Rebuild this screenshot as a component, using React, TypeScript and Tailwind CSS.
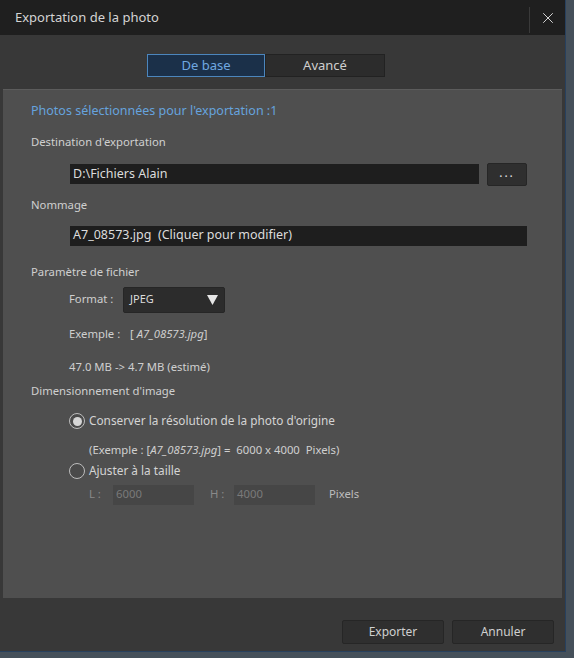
import { X } from 'lucide-react'

const font = { fontFamily: '"Noto Sans", "Open Sans", sans-serif' }

function Radio({ checked }: { checked?: boolean }) {
  return (
    <span className="w-[16px] h-[16px] rounded-full border border-[#bdbdbd] bg-[#4a4a4a] flex items-center justify-center shrink-0">
      {checked && <span className="w-[9px] h-[9px] rounded-full bg-[#d6d6d6]" />}
    </span>
  )
}

export default function App() {
  return (
    <div className="w-[574px] h-[658px] bg-[#45505a] overflow-hidden" style={font}>
      <div className="w-[566px] h-[652px] bg-[#383838] flex flex-col border-b border-r border-[#27405e]">
        {/* Title bar */}
        <div className="h-[35px] bg-[#1f1f1f] flex items-center shrink-0">
          <span className="pl-[15px] text-[13px] text-[#d4d4d4] flex-1">Exportation de la photo</span>
          <div className="w-px h-[26px] bg-[#3a3a3a] mt-[4px]" />
          <button className="w-[35px] h-[35px] flex items-center justify-center text-[#d8d8d8]">
            <X className="w-[18px] h-[18px]" strokeWidth={1.3} />
          </button>
        </div>

        {/* Tabs */}
        <div className="h-[54px] shrink-0 pt-[19px] pl-[147px]">
          <div className="flex">
            <button className="w-[118px] h-[23px] bg-[#1b3049] border border-[#4c86bd] text-[#70a8e0] text-[13px] leading-none">
              De base
            </button>
            <button className="w-[120px] h-[23px] bg-[#2c2c2c] border border-[#222] text-[#cfcfcf] text-[13px] leading-none">
              Avancé
            </button>
          </div>
        </div>

        {/* Content */}
        <div className="mx-[3px] h-[509px] bg-[#4f4f4f] border-t border-[#5c5c5c] shrink-0 text-[11.3px] text-[#cfcfcf]">
          <div className="pl-[28px] pt-[12px] text-[#66a3de] text-[12.5px]">Photos sélectionnées pour l'exportation :1</div>
          <div className="pl-[28px] mt-[13px]">Destination d'exportation</div>
          <div className="pl-[67px] mt-[12px] flex items-center gap-[8px]">
            <div className="w-[409px] h-[20px] bg-[#1e1e1e] flex items-center pl-[3px] text-[12.5px] text-[#dcdcdc]">D:\Fichiers Alain</div>
            <button className="w-[40px] h-[23px] bg-[#2f2f2f] border border-[#262626] rounded-[2px] text-[#e0e0e0] text-[12px] tracking-[2px] leading-none pb-[3px]">...</button>
          </div>
          <div className="pl-[28px] mt-[11px]">Nommage</div>
          <div className="pl-[67px] mt-[12px]">
            <div className="w-[457px] h-[20px] bg-[#1e1e1e] flex items-center pl-[3px] text-[12.5px] text-[#dcdcdc]">
              A7_08573.jpg&nbsp;&nbsp;(Cliquer pour modifier)
            </div>
          </div>
          <div className="pl-[28px] mt-[18px]">Paramètre de fichier</div>
          <div className="pl-[66px] mt-[6px] flex items-center">
            <span className="w-[54px]">Format :</span>
            <div className="w-[102px] h-[26px] bg-[#2c2c2c] border border-[#262626] rounded-[2px] flex items-center justify-between pl-[6px] pr-[6px] text-[11px] text-[#dcdcdc]">
              <span>JPEG</span>
              <svg width="11" height="10" viewBox="0 0 11 10"><path d="M0 0h11L5.5 10z" fill="#e6e6e6" /></svg>
            </div>
          </div>
          <div className="pl-[66px] mt-[13px] flex">
            <span className="w-[61px]">Exemple :</span>
            <span>[ <i>A7_08573.jpg</i>]</span>
          </div>
          <div className="pl-[66px] mt-[16px]">47.0 MB -&gt; 4.7 MB (estimé)</div>
          <div className="pl-[28px] mt-[8px]">Dimensionnement d'image</div>
          <div className="pl-[66px] mt-[12px] flex items-center gap-[4px] text-[11.8px] text-[#d4d4d4]">
            <Radio checked />
            <span>Conserver la résolution de la photo d'origine</span>
          </div>
          <div className="pl-[86px] mt-[12px]">
            (Exemple : [<i>A7_08573.jpg</i>] =&nbsp; 6000 x 4000&nbsp; Pixels)
          </div>
          <div className="pl-[66px] mt-[3px] flex items-center gap-[4px] text-[11.8px] text-[#d4d4d4]">
            <Radio />
            <span>Ajuster à la taille</span>
          </div>
          <div className="pl-[86px] mt-[5px] flex items-center text-[#8a8a8a]">
            <span className="w-[24px]">L :</span>
            <div className="w-[81px] h-[20px] bg-[#464646] flex items-center pl-[3px] text-[#7a7a7a]">6000</div>
            <span className="w-[40px] pl-[16px]">H :</span>
            <div className="w-[81px] h-[20px] bg-[#464646] flex items-center pl-[3px] text-[#7a7a7a]">4000</div>
            <span className="pl-[14px] text-[#bdbdbd]">Pixels</span>
          </div>
        </div>

        {/* Footer */}
        <div className="flex-1 flex items-center justify-end gap-[8px] pr-[11px] pt-[14px]">
          <button className="w-[102px] h-[24px] bg-[#2f2f2f] border border-[#262626] rounded-[2px] text-[12px] text-[#d0d0d0]">Exporter</button>
          <button className="w-[102px] h-[24px] bg-[#2f2f2f] border border-[#262626] rounded-[2px] text-[12px] text-[#d0d0d0]">Annuler</button>
        </div>
      </div>
    </div>
  )
}
